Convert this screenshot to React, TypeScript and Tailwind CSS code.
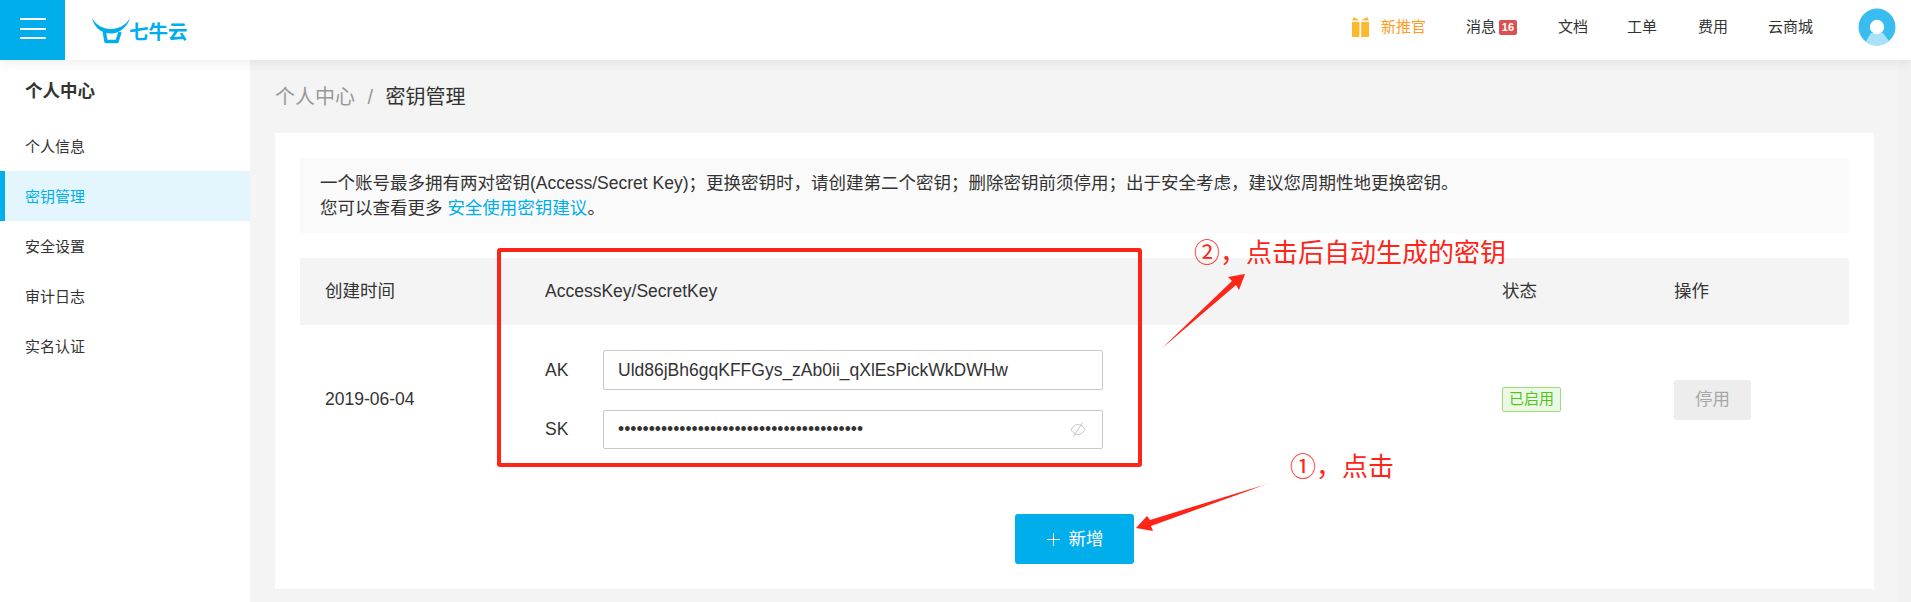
import { useState } from "react";

const sideItems = ["个人信息", "密钥管理", "安全设置", "审计日志", "实名认证"];
const navItems = ["文档", "工单", "费用", "云商城"];

const Logo = () => (
  <div className="ml-[26px] flex items-end">
    <svg width="42" height="27" viewBox="0 0 42 27" fill="none">
      <path d="M1 1C5 8 12 12 20 12C28 12 35 8 39 1C37 9 29 16.5 20 16.5C10 16.5 3 10 1 1Z" fill="#00aeec" />
      <path d="M13 13L15 24.5H26L29 15" stroke="#00aeec" strokeWidth="3.5" strokeLinejoin="round" />
    </svg>
    <span className="ml-[-4px] text-[19.5px] leading-[24px] font-bold text-[#00aeec]">七牛云</span>
  </div>
);

const Gift = () => (
  <svg width="17" height="20" viewBox="0 0 17 20" fill="#fdb92e">
    <path d="M0 5H7.4V20H1C.4 20 0 19.6 0 19V5Z" />
    <path d="M9.2 5H17V19C17 19.6 16.6 20 16 20H9.2V5Z" />
    <path d="M2 0L7.4 3.6H0L2 0Z" />
    <path d="M15 0L17 3.6H9.2L15 0Z" />
  </svg>
);

const Avatar = () => (
  <svg width="38" height="38" viewBox="0 0 38 38">
    <circle cx="19" cy="19" r="18.5" fill="#39bcef" />
    <path d="M13 25H25L31 33C24 39 14 39 7.5 34L13 25Z" fill="#a8e1f8" />
    <circle cx="19" cy="19" r="7.2" fill="#fff" />
  </svg>
);

const EyeOff = () => (
  <svg width="16" height="15" viewBox="0 0 16 15" fill="none" stroke="#c4c4c4" strokeWidth="1">
    <path d="M1 7.5C3 4 5.5 2.5 8 2.5C10.5 2.5 13 4 15 7.5C13 11 10.5 12.5 8 12.5C5.5 12.5 3 11 1 7.5Z" />
    <path d="M12.5 .5L3.5 14.5" />
  </svg>
);

const Header = () => (
  <header className="relative z-10 flex h-[60px] shrink-0 items-center bg-white shadow-[0_2px_12px_rgba(0,0,0,0.08)]">
    <div className="flex h-full w-[65px] flex-col items-center justify-center gap-[7.5px] bg-[#00aeec] pb-[3px]">
      <div className="h-[2px] w-[26px] bg-white" />
      <div className="h-[2px] w-[26px] bg-white" />
      <div className="h-[2px] w-[26px] bg-white" />
    </div>
    <Logo />
    <div className="ml-auto flex items-center pb-[6px] text-[15px] text-[#333]">
      <div className="flex items-center text-[#ff9b1e]">
        <Gift />
        <span className="ml-[12px]">新推官</span>
      </div>
      <div className="ml-[40px] flex items-center">
        <span>消息</span>
        <span className="ml-[3px] flex h-[15px] w-[18px] items-center justify-center rounded-[2px] bg-[#dd4f50] text-[11px] font-bold text-white">
          16
        </span>
      </div>
      <span className="ml-[41px]">{navItems[0]}</span>
      <span className="ml-[39px]">{navItems[1]}</span>
      <span className="ml-[41px]">{navItems[2]}</span>
      <span className="ml-[40px]">{navItems[3]}</span>
      <div className="mr-[15px] ml-[45px] flex">
        <Avatar />
      </div>
    </div>
  </header>
);

const Sidebar = () => (
  <aside className="w-[250px] shrink-0 bg-white text-[15px] text-[#333]">
    <div className="flex h-[61px] items-center pt-[2px] pl-[25px] text-[17.5px] font-bold">个人中心</div>
    {sideItems.map((item) =>
      item === "密钥管理" ? (
        <div
          key={item}
          className="flex h-[50px] items-center border-l-[5px] border-[#00aeec] bg-[#e3f6fd] pt-[2px] pl-[20px] text-[#00aeec]"
        >
          {item}
        </div>
      ) : (
        <div key={item} className="flex h-[50px] items-center pt-[2px] pl-[25px]">
          {item}
        </div>
      )
    )}
  </aside>
);

const KeyTable = () => {
  const [sk] = useState("UkE3nQ8vTz0pLm2sYc7HdR5xWa9JfB4gNo6iKt1q");
  return (
    <div className="mt-[25px] text-[17.5px] text-[#333]">
      <div className="grid h-[67px] grid-cols-[220px_957px_172px_200px] items-center bg-[#f4f4f4]">
        <div className="pl-[25px]">创建时间</div>
        <div className="pl-[25px]">AccessKey/SecretKey</div>
        <div className="pl-[25px]">状态</div>
        <div className="pl-[25px]">操作</div>
      </div>
      <div className="grid h-[149px] grid-cols-[220px_957px_172px_200px] items-center">
        <div className="pl-[25px]">2019-06-04</div>
        <div className="flex flex-col gap-[20px] pl-[25px]">
          <div className="flex items-center">
            <span className="w-[58px]">AK</span>
            <input
              readOnly
              value="Uld86jBh6gqKFFGys_zAb0ii_qXlEsPickWkDWHw"
              className="h-[40px] w-[500px] rounded-[2px] border border-[#c8c8c8] px-[14px] outline-none"
            />
          </div>
          <div className="flex items-center">
            <span className="w-[58px]">SK</span>
            <div className="relative">
              <input
                readOnly
                type="password"
                value={sk}
                className="h-[39px] w-[500px] rounded-[2px] border border-[#c8c8c8] px-[14px] outline-none"
              />
              <div className="absolute top-[12px] right-[17px] flex">
                <EyeOff />
              </div>
            </div>
          </div>
        </div>
        <div className="pl-[25px]">
          <span className="flex h-[25px] w-[59px] items-center justify-center rounded-[2px] border border-[#9be07a] bg-[#ebf8e4] text-[15px] text-[#52c41a]">
            已启用
          </span>
        </div>
        <div className="pl-[25px]">
          <button className="h-[40px] w-[77px] rounded-[3px] bg-[#ededed] text-[#a8a8a8]">停用</button>
        </div>
      </div>
      <div className="mt-[40px] flex justify-center">
        <button className="flex h-[50px] w-[119px] items-center justify-center rounded-[3px] bg-[#00aeec] pl-[1px] text-white">
          <svg width="13" height="13" viewBox="0 0 13 13" className="mr-[9px]" stroke="#fff" strokeWidth="1">
            <path d="M6.5 0V13M0 6.5H13" />
          </svg>
          新增
        </button>
      </div>
    </div>
  );
};

const Annotations = () => (
  <>
    <div className="absolute top-[248px] left-[497px] h-[219px] w-[645px] rounded-[3px] border-[4px] border-[#ff2418]" />
    <div className="absolute top-[236px] left-[1194px] text-[26px] leading-[34px] text-[#ff2418]">②，点击后自动生成的密钥</div>
    <div className="absolute top-[450px] left-[1290px] text-[26px] leading-[34px] text-[#ff2418]">①，点击</div>
    <svg className="absolute top-0 left-0" width="1911" height="602" viewBox="0 0 1911 602">
      <defs>
        <linearGradient id="fadeOne" x1="1270" y1="483" x2="1136" y2="528" gradientUnits="userSpaceOnUse">
          <stop offset="0" stopColor="#ff2418" stopOpacity="0.2" />
          <stop offset="0.15" stopColor="#ff2418" />
        </linearGradient>
        <linearGradient id="fadeTwo" x1="1160" y1="350" x2="1245" y2="274" gradientUnits="userSpaceOnUse">
          <stop offset="0" stopColor="#ff2418" stopOpacity="0.2" />
          <stop offset="0.1" stopColor="#ff2418" />
        </linearGradient>
      </defs>
      <path d="M1270 483L1150 520L1147 516L1136 528L1153 531L1151 526Z" fill="url(#fadeOne)" />
      <path d="M1160 350L1232 281L1228 277L1245 274L1239 290L1236 285Z" fill="url(#fadeTwo)" />
    </svg>
  </>
);

export default function App() {
  return (
    <div className="relative flex h-[602px] flex-col overflow-hidden bg-[#f4f4f4] [font-family:'Liberation_Sans','Noto_Sans_CJK_SC',sans-serif]">
      <Header />
      <div className="flex flex-1">
        <Sidebar />
        <main className="flex-1 px-[25px]">
          <div className="flex h-[73px] items-center text-[20px] text-[#999]">
            个人中心
            <span className="mx-[12.5px]">/</span>
            <span className="text-[#333]">密钥管理</span>
          </div>
          <div className="bg-white p-[25px]">
            <div className="h-[75px] bg-[#fafafa] px-[20px] py-[12.5px] text-[17.5px] leading-[25px] text-[#333]">
              <p>一个账号最多拥有两对密钥(Access/Secret Key)；更换密钥时，请创建第二个密钥；删除密钥前须停用；出于安全考虑，建议您周期性地更换密钥。</p>
              <p>
                您可以查看更多 <span className="text-[#00aeec]">安全使用密钥建议</span>。
              </p>
            </div>
            <KeyTable />
          </div>
        </main>
        <div className="w-[12px] shrink-0 bg-[#f1f1f1]" />
      </div>
      <Annotations />
    </div>
  );
}
